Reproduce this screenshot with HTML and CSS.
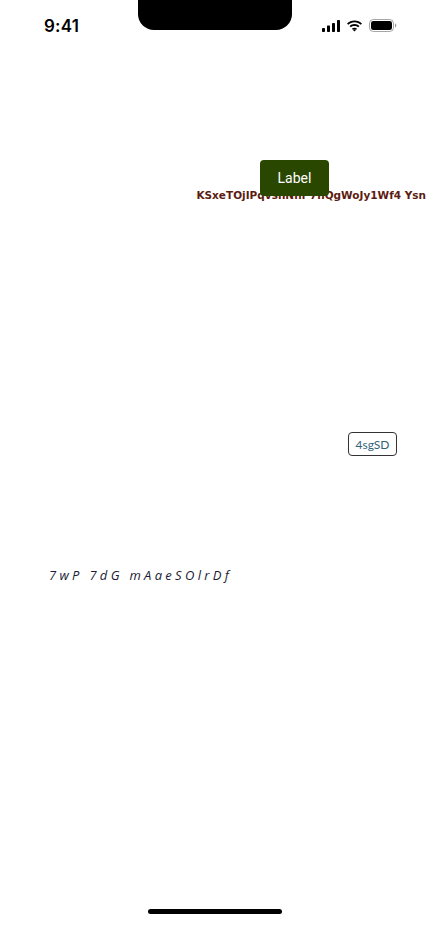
FILE: index.html
```html
<!DOCTYPE html>
<html>
<head>
<meta charset="utf-8">
<link rel="stylesheet" href="styles.css">
</head>
<body>
<div class="screen">
  <div class="status">
    <div class="time">9:41</div>
    <div class="notch"></div>
    <div class="icons">
      <svg width="18" height="12" viewBox="0 0 18 12"><rect x="0" y="8" width="3" height="4" rx="0.7" fill="#000"/><rect x="5" y="5.5" width="3" height="6.5" rx="0.7" fill="#000"/><rect x="10" y="3" width="3" height="9" rx="0.7" fill="#000"/><rect x="15" y="0" width="3" height="12" rx="0.7" fill="#000"/></svg>
      <svg width="17" height="12" viewBox="0 0 17 12"><path d="M8.5 2.3c2.4 0 4.6.9 6.2 2.5l1.3-1.3C14 1.5 11.4.4 8.5.4S3 1.5 1 3.5l1.3 1.3C3.9 3.2 6.1 2.3 8.5 2.3z" fill="#000"/><path d="M8.5 5.9c1.4 0 2.7.5 3.7 1.4l1.3-1.3C12.2 4.8 10.4 4 8.5 4S4.8 4.8 3.5 6l1.3 1.3c1-.9 2.3-1.4 3.7-1.4z" fill="#000"/><path d="M8.5 9.3c.6 0 1.1.2 1.5.6l-1.5 1.6-1.5-1.6c.4-.4.9-.6 1.5-.6z" fill="#000"/><path d="M8.5 7.7c1 0 1.9.4 2.6 1l-1 1.1c-.4-.4-1-.6-1.6-.6s-1.2.2-1.600.6l-1-1.1c.7-.6 1.6-1 2.6-1z" fill="#000"/></svg>
      <svg width="28" height="13" viewBox="0 0 28 13"><rect x="0.5" y="0.5" width="24" height="12" rx="3.8" fill="none" stroke="#000" stroke-opacity="0.35"/><rect x="2" y="2" width="21" height="9" rx="2.3" fill="#000"/><path d="M26 4.5v4c.8-.3 1.3-1.1 1.3-2s-.5-1.7-1.3-2z" fill="#000" fill-opacity="0.4"/></svg>
    </div>
  </div>
  <div class="content">
    <div class="btn-row"><button class="label-btn">Label</button></div>
    <div class="red-row"><span class="red-text">KSxeTOjIPqvsnNnf 7nQgWoJy1Wf4 Ysn</span></div>
    <div class="badge-row"><span class="badge">4sgSD</span></div>
    <div class="italic-row"><span class="italic-text">7wP 7dG mAaeSOlrDf</span></div>
  </div>
  <div class="home-bar"><div class="home-indicator"></div></div>
</div>
</body>
</html>
```
FILE: styles.css
```css
* { box-sizing: border-box; }
html, body { margin: 0; padding: 0; background: #fff; }
.screen {
  width: 430px;
  height: 932px;
  display: flex;
  flex-direction: column;
  overflow: hidden;
  font-family: "Inter", "Liberation Sans", sans-serif;
}
.status {
  height: 50px;
  display: flex;
  align-items: flex-start;
  justify-content: flex-start;
  padding: 0 33px 0 44px;
  flex-shrink: 0;
}
.time {
  margin-top: 16px;
  font-size: 17px;
  font-weight: 600;
  color: #000;
  letter-spacing: 0.2px;
  width: 60px;
}
.notch {
  width: 154px;
  height: 30px;
  background: #000;
  border-radius: 0 0 16px 16px;
  margin-left: 34px;
}
.icons {
  margin-top: 19px;
  margin-left: auto;
  display: flex;
  align-items: center;
  gap: 6px;
}
.content {
  flex: 1;
  display: flex;
  flex-direction: column;
}
.btn-row {
  margin-top: 110px;
  padding-left: 260px;
  display: flex;
}
.label-btn {
  position: relative;
  z-index: 1;
  width: 69px;
  height: 36px;
  background: #2a4700;
  color: #fff;
  border: none;
  border-radius: 4px;
  font-family: "Roboto", "Liberation Sans", sans-serif;
  font-size: 14px;
  padding: 0;
}
.red-row {
  margin-top: -8px;
  display: flex;
  justify-content: flex-end;
  padding-right: 4px;
}
.red-text {
  font-family: "DejaVu Sans", sans-serif;
  font-weight: 700;
  font-size: 10.5px;
  color: #5c1c10;
  line-height: 14px;
}
.badge-row {
  margin-top: 230px;
  display: flex;
  justify-content: flex-end;
  padding-right: 33px;
}
.badge {
  width: 49px;
  height: 24px;
  border: 1px solid #333;
  border-radius: 4px;
  font-family: "Lato", sans-serif;
  font-size: 12px;
  color: #2f6478;
  display: flex;
  align-items: center;
  justify-content: center;
}
.italic-row {
  margin-top: 108px;
  padding-left: 49px;
}
.italic-text {
  font-family: "Open Sans", sans-serif;
  font-style: italic;
  font-size: 13px;
  letter-spacing: 3.3px;
  color: #1b1b33;
  line-height: 20px;
}
.home-bar {
  height: 32px;
  display: flex;
  justify-content: center;
  flex-shrink: 0;
}
.home-indicator {
  width: 134px;
  height: 5px;
  border-radius: 3px;
  background: #000;
  margin-top: 9px;
}
```
